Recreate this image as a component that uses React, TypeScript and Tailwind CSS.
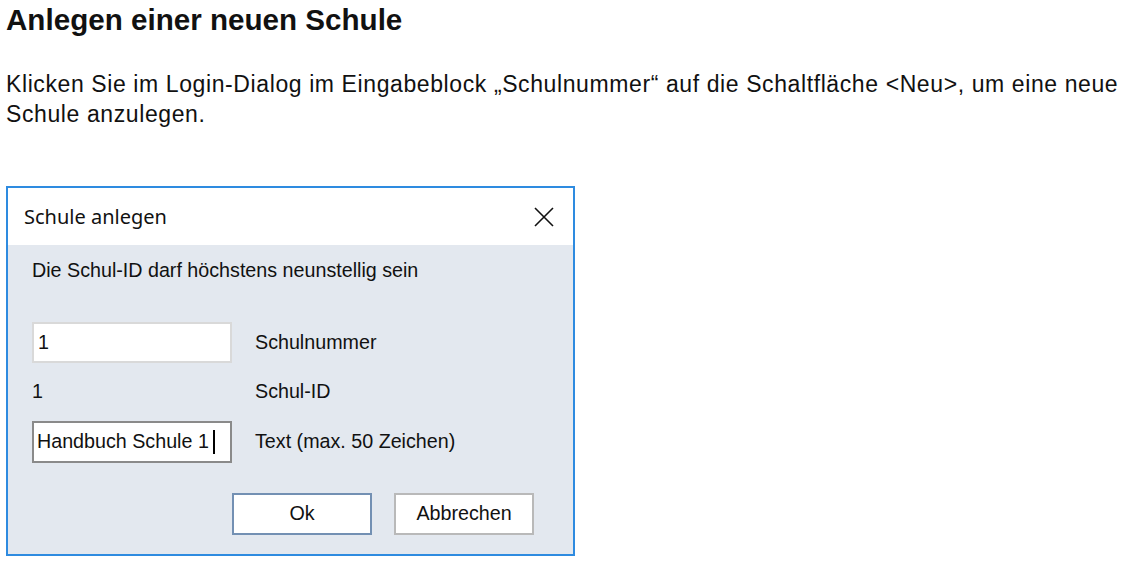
import React from "react";

export default function App() {
  const dlg = { fontFamily: '"Liberation Sans", Arial, sans-serif' };
  return (
    <div className="w-[1125px] h-[576px] bg-white text-black" style={{ fontFamily: '"Liberation Sans", Arial, sans-serif' }}>
      <h1 className="pl-[6px] text-[29.6px] leading-[40px] font-bold text-[#111]">Anlegen einer neuen Schule</h1>
      <p className="pl-[6px] mt-[29px] text-[23px] leading-[30px] tracking-[0.6px] text-[#111] whitespace-nowrap">
        Klicken Sie im Login-Dialog im Eingabeblock „Schulnummer“ auf die Schaltfläche &lt;Neu&gt;, um eine neue
        <br />
        Schule anzulegen.
      </p>
      <div className="ml-[6px] mt-[57px] w-[569px] border-2 border-[#2e8be0] flex flex-col">
        <div className="h-[57px] bg-white flex items-center justify-between pl-[16px] pr-[19px]">
          <span className="text-[20px] text-[#111]" style={{ fontFamily: '"Noto Sans", "Open Sans", sans-serif' }}>
            Schule anlegen
          </span>
          <svg width="20" height="20" viewBox="0 0 20 20">
            <path d="M1 1 L19 19 M19 1 L1 19" stroke="#111" strokeWidth="1.6" fill="none" />
          </svg>
        </div>
        <div className="bg-[#e3e8ef] pl-[24px] pr-[39px] pt-[14px] pb-[19px] text-[19.7px] text-[#111]" style={dlg}>
          <div className="h-[22px] leading-[22px]">Die Schul-ID darf höchstens neunstellig sein</div>
          <div className="mt-[41px] grid grid-cols-[200px_1fr] gap-x-[23px]">
            <div className="h-[41px] bg-white border-2 border-[#d9d9d9] flex items-center pl-[4px]">1</div>
            <div className="flex items-center">Schulnummer</div>
            <div className="h-[58px] flex items-center">1</div>
            <div className="flex items-center">Schul-ID</div>
            <div className="h-[42px] bg-white border-2 border-[#8a8a8a] flex items-center pl-[3px]">
              <span>Handbuch Schule 1</span>
              <span className="ml-[4px] w-[2px] h-[24px] bg-black" />
            </div>
            <div className="flex items-center">Text (max. 50 Zeichen)</div>
          </div>
          <div className="mt-[30px] flex justify-end gap-[22px]">
            <button className="w-[140px] h-[42px] bg-white border-2 border-[#7390b3] flex items-center justify-center">Ok</button>
            <button className="w-[140px] h-[42px] bg-white border-2 border-[#b9b9b9] flex items-center justify-center">Abbrechen</button>
          </div>
        </div>
      </div>
    </div>
  );
}
